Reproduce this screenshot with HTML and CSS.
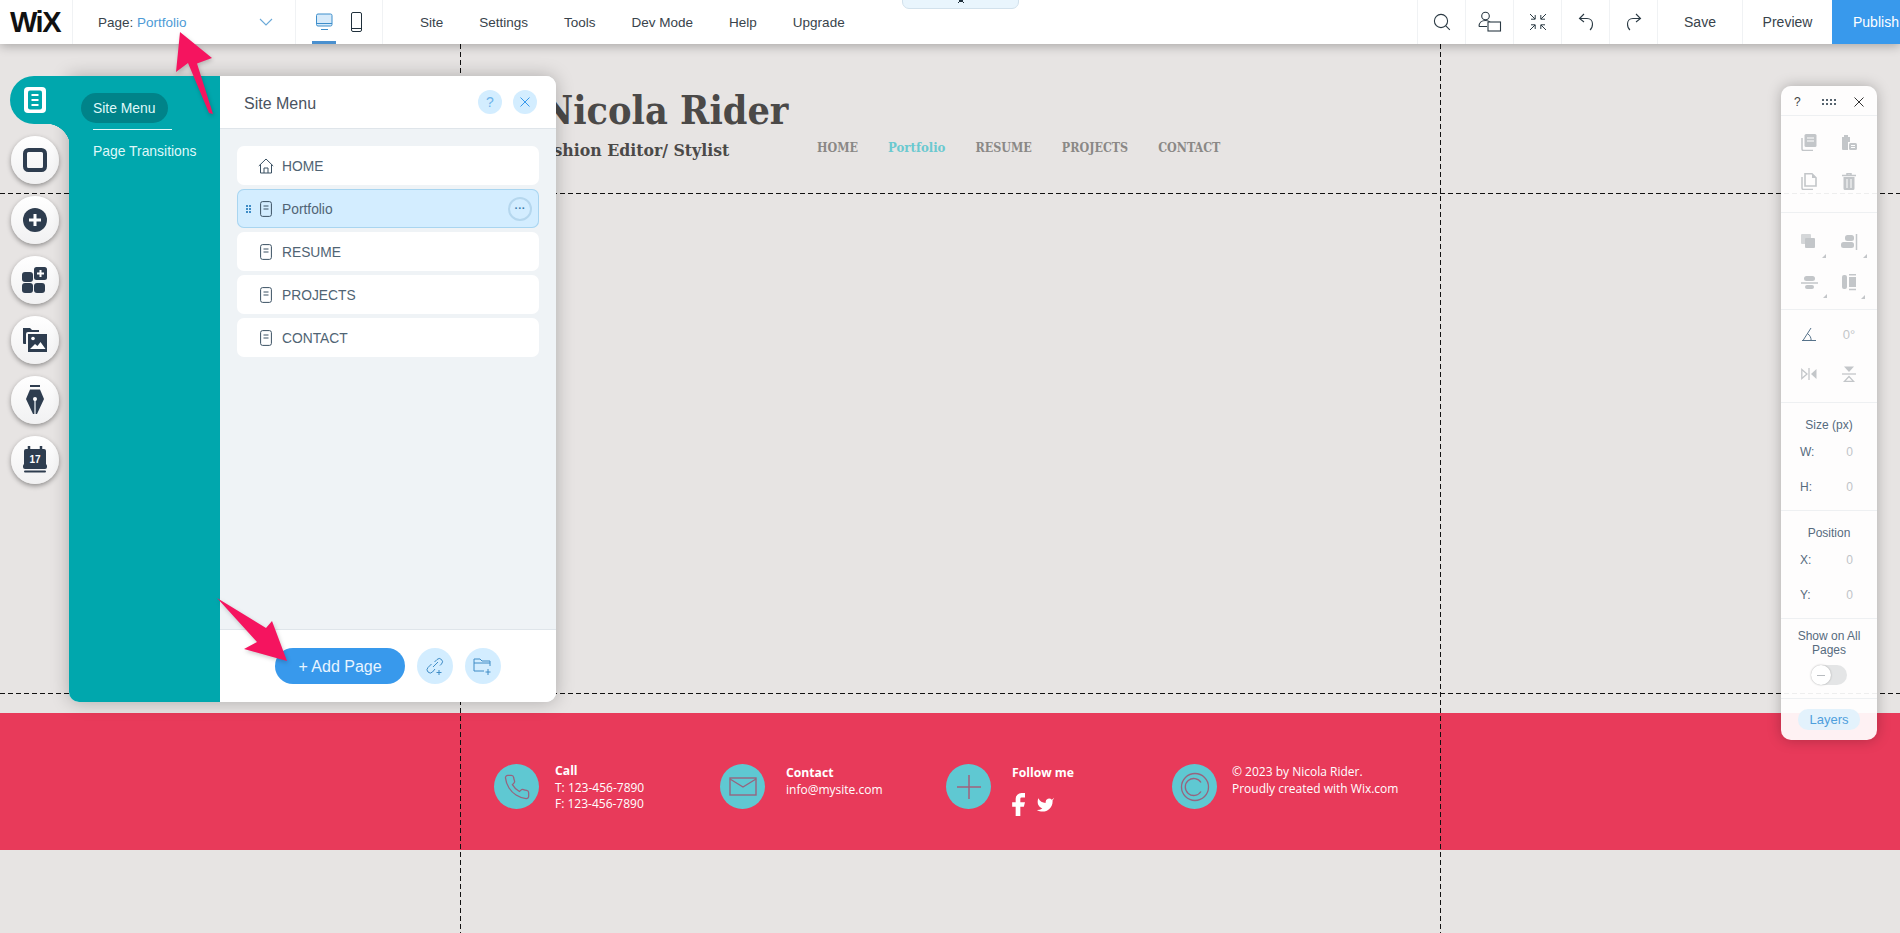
FILE: index.html
```html
<!DOCTYPE html>
<html lang="en">
<head>
<meta charset="utf-8">
<title>Wix Editor</title>
<link rel="stylesheet" href="styles.css">
</head>
<body>
<svg class="defs" width="0" height="0" aria-hidden="true">
  <symbol id="pg" viewBox="0 0 12 16"><rect x=".6" y=".6" width="10.800" height="14.800" rx="2" fill="none" stroke="currentColor"/><path d="M3.500 5h5M3.500 8h5" stroke="currentColor" fill="none"/></symbol>
</svg>
<header class="topbar">
  <div class="cell logo-cell"><span class="logo">WiX</span></div>
  <div class="cell page-cell">
    <span class="page-label">Page: <span class="blue">Portfolio</span></span>
    <svg class="chev" width="14" height="8" viewBox="0 0 14 8"><path d="M1 1l6 6 6-6" fill="none" stroke="#6aa9d8" stroke-width="1.100"/></svg>
  </div>
  <div class="cell device-cell">
    <div class="device active">
      <svg width="17" height="18" viewBox="0 0 17 18"><rect x=".5" y="1" width="15.500" height="12" rx="1.500" fill="#d6eafa" stroke="#3d8ecb"/><path d="M.5 10.500h15.500M5 16.500h7" stroke="#3d8ecb" fill="none"/></svg>
    </div>
    <div class="device">
      <svg width="11" height="20" viewBox="0 0 11 20"><rect x=".5" y=".5" width="10" height="19" rx="1.500" fill="none" stroke="#20303c"/><path d="M.5 16.500h10" stroke="#20303c"/></svg>
    </div>
  </div>
  <nav class="menu">
    <span>Site</span><span>Settings</span><span>Tools</span><span>Dev Mode</span><span>Help</span><span>Upgrade</span>
  </nav>
  <div class="tools">
    <div class="tool"><svg width="18" height="18" viewBox="0 0 18 18"><circle cx="8" cy="8" r="6.600" fill="none" stroke="#2b3a44" stroke-width="1.100"/><path d="M12.800 12.800l4 4" stroke="#2b3a44" stroke-width="1.100"/></svg></div>
    <div class="tool"><svg width="24" height="22" viewBox="0 0 24 22"><circle cx="7.500" cy="5" r="3.800" fill="none" stroke="#2b3a44" stroke-width="1.100"/><path d="M1 15.500c0-3.500 2.500-6 6.500-6 2 0 3.500.6 4.600 1.600M1 15.500h8" fill="none" stroke="#2b3a44" stroke-width="1.100"/><rect x="10" y="11" width="12.500" height="9" fill="#fff" stroke="#2b3a44" stroke-width="1.100"/></svg></div>
    <div class="tool"><svg width="18" height="18" viewBox="0 0 18 18"><path d="M1 1l5 5M6.200 2v4.200H2M17 1l-5 5M11.800 2v4.200H16M1 17l5-5M6.200 16v-4.200H2M17 17l-5-5M11.800 16v-4.200H16" fill="none" stroke="#2b3a44"/></svg></div>
    <div class="tool"><svg width="16" height="18" viewBox="0 0 16 18"><path d="M6 1L1.500 5.500 6 9M1.500 5.500H9c3.500 0 5.500 2.500 5.500 5.500 0 2.600-1 4.800-2.500 6" fill="none" stroke="#2b3a44" stroke-width="1.100"/></svg></div>
    <div class="tool"><svg width="16" height="18" viewBox="0 0 16 18"><path d="M10 1l4.500 4.500L10 9M14.500 5.500H7c-3.500 0-5.500 2.500-5.500 5.500 0 2.600 1 4.800 2.500 6" fill="none" stroke="#2b3a44" stroke-width="1.100"/></svg></div>
    <div class="action save">Save</div>
    <div class="action preview">Preview</div>
    <div class="publish">Publish</div>
  </div>
  <div class="tab-pill"><svg width="8" height="4" viewBox="0 0 8 4"><path d="M1 0l3 3 3-3M1 4l3-3 3 3" fill="none" stroke="#20303c"/></svg></div>
</header>

<main class="stage">
  <div class="site">
    <section class="site-head">
      <div class="brand">
        <h1>Nicola Rider</h1>
        <p>Fashion Editor/ Stylist</p>
      </div>
      <nav class="site-nav">
        <span>HOME</span><span class="current">Portfolio</span><span>RESUME</span><span>PROJECTS</span><span>CONTACT</span>
      </nav>
    </section>
    <section class="site-body"></section>
    <footer class="site-foot">
      <div class="foot-inner">
        <div class="foot-item call">
          <div class="disc"><svg width="28" height="28" viewBox="0 0 24 24"><path d="M22 16.920v3a2 2 0 0 1-2.180 2 19.790 19.790 0 0 1-8.630-3.070 19.500 19.500 0 0 1-6-6 19.790 19.790 0 0 1-3.070-8.670A2 2 0 0 1 4.110 2h3a2 2 0 0 1 2 1.720 12.840 12.840 0 0 0 .7 2.810 2 2 0 0 1-.45 2.110L8.090 9.910a16 16 0 0 0 6 6l1.270-1.270a2 2 0 0 1 2.110-.45 12.840 12.840 0 0 0 2.810.7A2 2 0 0 1 22 16.920z" fill="none" stroke="#97647f" stroke-width="1.100"/></svg></div>
          <div class="foot-text call-text"><b>Call</b><span>T: 123-456-7890</span><span>F: 123-456-7890</span></div>
        </div>
        <div class="foot-item contact">
          <div class="disc"><svg width="28" height="20" viewBox="0 0 28 20"><rect x="1" y="1" width="26" height="17" fill="none" stroke="#97647f" stroke-width="1.400"/><path d="M1 2l13 8 13-8" fill="none" stroke="#97647f" stroke-width="1.400"/></svg></div>
          <div class="foot-text"><b>Contact</b><span>info@mysite.com</span></div>
        </div>
        <div class="foot-item follow">
          <div class="disc"><svg width="26" height="26" viewBox="0 0 26 26"><path d="M13 1v24M1 13h24" stroke="#a2607c" stroke-width="1.500"/></svg></div>
          <div class="foot-text"><b>Follow me</b>
            <div class="social">
              <svg width="14" height="23" viewBox="6 2 12 20" preserveAspectRatio="none"><path d="M18 2h-3a5 5 0 0 0-5 5v3H7v4h3v8h4v-8h3l1-4h-4V7a1 1 0 0 1 1-1h3z" fill="#fff"/></svg>
              <svg width="19" height="17" viewBox="0 2 24 20"><path d="M23 3a10.900 10.900 0 0 1-3 3 4.480 4.480 0 0 0-7.860 3v1A10.660 10.660 0 0 1 3 4s-4 9 5 13a11.640 11.640 0 0 1-7 2c9 5 20 0 20-11.500a4.500 4.500 0 0 0-.08-.83A7.720 7.720 0 0 0 23 3z" fill="#fff"/></svg>
            </div>
          </div>
        </div>
        <div class="foot-item copy">
          <div class="disc"><svg width="30" height="30" viewBox="0 0 30 30"><circle cx="15" cy="15" r="13.500" fill="none" stroke="#97647f" stroke-width="1.300"/><path d="M21 10.500a8.500 8.500 0 1 0 0 9" fill="none" stroke="#97647f" stroke-width="1.300"/></svg></div>
          <div class="foot-text plain"><span>© 2023 by Nicola Rider.</span><span>Proudly created with Wix.com</span></div>
        </div>
      </div>
    </footer>
  </div>

  <div class="guide v v1"></div>
  <div class="guide v v2"></div>
  <div class="guide h h1"></div>
  <div class="guide h h2"></div>

  <div class="rail">
    <div class="rail-btn"><svg width="24" height="24" viewBox="0 0 24 24"><rect x="2" y="2" width="20" height="20" rx="3.500" fill="none" stroke="#2e3d4f" stroke-width="4"/></svg></div>
    <div class="rail-btn"><svg width="24" height="24" viewBox="0 0 24 24"><circle cx="12" cy="12" r="12" fill="#2e3d4f"/><path d="M12 6v12M6 12h12" stroke="#fff" stroke-width="3"/></svg></div>
    <div class="rail-btn"><svg width="26" height="26" viewBox="0 0 26 26"><g fill="#2e3d4f"><rect x="0" y="5" width="11" height="10" rx="3"/><rect x="0" y="16" width="11" height="10" rx="3"/><rect x="12" y="16" width="11" height="10" rx="3"/><rect x="12" y="0" width="13" height="13" rx="2.500"/></g><path d="M18.500 3v7M15 6.500h7" stroke="#fff" stroke-width="2"/></svg></div>
    <div class="rail-btn"><svg width="26" height="26" viewBox="0 0 26 26"><path d="M1 1h7l2 2h7v2H6a2 2 0 0 0-2 2v10H2a1 1 0 0 1-1-1z" fill="#2e3d4f"/><rect x="6" y="7" width="19" height="18" fill="#2e3d4f"/><circle cx="11" cy="11.500" r="1.800" fill="#fff"/><path d="M8 22l5-5 2.500 2 3-4 5 7z" fill="#fff"/></svg></div>
    <div class="rail-btn"><svg width="20" height="32" viewBox="0 0 20 32"><rect x="5" y="1" width="10" height="2" fill="#2e3d4f"/><path d="M5 5.500h10L19 15l-7 15h-4L1 15z" fill="#2e3d4f"/><path d="M10 16v14" stroke="#c4ccd3" stroke-width="1.600"/><circle cx="10" cy="15" r="2" fill="#fff"/></svg></div>
    <div class="rail-btn cal"><svg width="24" height="28" viewBox="0 0 24 28"><path d="M6 0v4M18 0v4" stroke="#2e3d4f" stroke-width="2.500"/><rect x="1" y="3" width="22" height="18" rx="2" fill="#2e3d4f"/><rect x="0" y="18" width="24" height="5" rx="2" fill="#2e3d4f"/><rect x="1" y="24.500" width="22" height="2" rx="1" fill="#2e3d4f"/></svg><span class="cal-num">17</span></div>
  </div>

  <div class="pages-panel">
    <div class="panel-tab">
      <svg width="22" height="26" viewBox="0 0 22 26"><rect width="22" height="26" rx="4" fill="#fff"/><rect x="4" y="3.500" width="14" height="19" rx="2" fill="#00a7ad"/><path d="M7.500 8h7M7.500 13h7M7.500 18h7" stroke="#fff" stroke-width="2"/></svg>
    </div>
    <aside class="teal">
      <div class="teal-pill">Site Menu</div>
      <div class="teal-line"></div>
      <div class="teal-link">Page Transitions</div>
    </aside>
    <div class="pane">
      <div class="pane-head">
        <span class="pane-title">Site Menu</span>
        <div class="pane-btns">
          <span class="round">?</span>
          <span class="round"><svg width="12" height="12" viewBox="0 0 12 12"><path d="M1.500 1.500l9 9M10.500 1.500l-9 9" stroke="#3899ec"/></svg></span>
        </div>
      </div>
      <div class="rows">
        <div class="row">
          <span class="row-icon home"><svg width="16" height="16" viewBox="0 0 16 16"><path d="M.8 8L8 1l7.200 7M2.500 6.500V15h11V6.500M6 15v-5h4v5" fill="none" stroke="#3b5163"/></svg></span>
          <span>HOME</span>
        </div>
        <div class="row selected">
          <span class="dots"><i></i><i></i><i></i><i></i><i></i><i></i></span>
          <span class="row-icon"><svg width="12" height="16"><use href="#pg"/></svg></span>
          <span>Portfolio</span>
          <span class="more">···</span>
        </div>
        <div class="row"><span class="row-icon"><svg width="12" height="16"><use href="#pg"/></svg></span><span>RESUME</span></div>
        <div class="row"><span class="row-icon"><svg width="12" height="16"><use href="#pg"/></svg></span><span>PROJECTS</span></div>
        <div class="row"><span class="row-icon"><svg width="12" height="16"><use href="#pg"/></svg></span><span>CONTACT</span></div>
      </div>
      <div class="pane-foot">
        <div class="add">+ Add Page</div>
        <div class="circle"><svg width="20" height="20" viewBox="0 0 20 20"><path d="M8 11l5-5M6.500 8L3 11.500a3 3 0 0 0 4.500 4.500L10 13M9.500 6L12 3.500A3 3 0 0 1 16.500 8l-1.500 1.500M14 14v5M11.500 16.500h5" fill="none" stroke="#3f8cc6"/></svg></div>
        <div class="circle"><svg width="20" height="20" viewBox="0 0 20 20"><path d="M1 3h6l2 2h8v5M1 3v12h10M1 7h16M15 13v6M12.500 16h5" fill="none" stroke="#3f8cc6"/></svg></div>
      </div>
    </div>
  </div>

  <div class="inspector">
    <div class="ins-head">
      <span class="q">?</span>
      <span class="grip"><i></i><i></i><i></i><i></i><i></i><i></i><i></i><i></i></span>
      <svg width="10" height="10" viewBox="0 0 10 10"><path d="M.5.5l9 9M9.500.5l-9 9" stroke="#333"/></svg>
    </div>
    <div class="ins-sec s1">
      <svg width="16" height="17" viewBox="0 0 16 17"><rect x="3.500" y="0" width="12" height="13" rx="1.500" class="f"/><path d="M6 4h7M6 7h7" stroke="#fff"/><path d="M1 4v11a1.500 1.500 0 0 0 1.500 1.500H12" fill="none" stroke="#c3c6c9" stroke-width="1.500"/></svg>
      <svg width="16" height="17" viewBox="0 0 16 17"><path d="M1 3h2V1h4v2h2v5H7v8H2a1 1 0 0 1-1-1z" class="f"/><rect x="8" y="9" width="8" height="7" rx="1.500" class="f"/><path d="M10 11.500h4M10 13.500h4" stroke="#fff"/></svg>
      <svg width="16" height="17" viewBox="0 0 16 17"><path d="M4 .8h7l4 4V13H4z" fill="none" stroke="#c3c6c9" stroke-width="1.600"/><path d="M11 1l4 4h-4z" class="f"/><path d="M1 4v11a1.500 1.500 0 0 0 1.500 1.500H12" fill="none" stroke="#c3c6c9" stroke-width="1.500"/></svg>
      <svg width="14" height="17" viewBox="0 0 14 17"><path d="M0 2.500h14M5 2.500V.8h4v1.700" fill="none" stroke="#c3c6c9" stroke-width="1.500"/><path d="M1.500 4h11v11.500a1.500 1.500 0 0 1-1.500 1.500H3a1.500 1.500 0 0 1-1.500-1.500z" class="f"/><path d="M5 6v9M9 6v9" stroke="#fff"/></svg>
    </div>
    <div class="ins-sec s2">
      <span class="tri"><svg width="16" height="16" viewBox="0 0 16 16"><rect x="0" y="0" width="10" height="10" rx="1" fill="#d5d7d9"/><rect x="4" y="4" width="10" height="10" rx="1" class="f"/></svg></span>
      <span class="tri"><svg width="17" height="16" viewBox="0 0 17 16"><rect x="4" y="1" width="9" height="6" rx="2.500" class="f"/><rect x="0" y="8" width="13" height="6" rx="2.500" class="f"/><path d="M15.500 0v16" stroke="#c3c6c9" stroke-width="1.500"/></svg></span>
      <span class="tri"><svg width="17" height="14" viewBox="0 0 17 14"><rect x="3" y="0" width="11" height="5" rx="2.500" class="f"/><path d="M0 7h17" stroke="#c3c6c9" stroke-width="1.500"/><rect x="4" y="9" width="9" height="4" rx="2" class="f"/></svg></span>
      <span class="tri"><svg width="14" height="17" viewBox="0 0 14 17"><rect x="0" y="1" width="5" height="14" rx="2" class="f"/><rect x="7" y="3" width="7" height="10" class="f"/><path d="M7 .8h7M7 15.500h7" stroke="#c3c6c9" stroke-width="1.500"/></svg></span>
    </div>
    <div class="ins-sec s3">
      <svg width="14" height="14" viewBox="0 0 14 14"><path d="M0 13.500h14M1 13.500L9 1M6 7c2 1.300 3 3.500 3.200 6.500" fill="none" stroke="#56728a"/></svg>
      <span class="deg">0°</span>
      <svg width="16" height="12" viewBox="0 0 16 12"><path d="M.8 1.500L6 6 .8 10.500z" fill="none" stroke="#c3c6c9" stroke-width="1.300"/><path d="M8 0v12" stroke="#c3c6c9" stroke-width="1.300"/><path d="M15.500 1L10 6l5.500 5z" class="f"/></svg>
      <svg width="14" height="16" viewBox="0 0 14 16"><path d="M2 .5h10L7 6z" class="f"/><path d="M0 8h14" stroke="#c3c6c9" stroke-width="1.300"/><path d="M2.500 15.300h9L7 10.500z" fill="none" stroke="#c3c6c9" stroke-width="1.300"/></svg>
    </div>
    <div class="ins-form">
      <div class="form-title">Size (px)</div>
      <div class="form-row"><span>W:</span><span class="val">0</span></div>
      <div class="form-row"><span>H:</span><span class="val">0</span></div>
    </div>
    <div class="ins-form">
      <div class="form-title">Position</div>
      <div class="form-row"><span>X:</span><span class="val">0</span></div>
      <div class="form-row"><span>Y:</span><span class="val">0</span></div>
    </div>
    <div class="ins-show">
      <div class="show-label">Show on All Pages</div>
      <div class="toggle"><span class="knob"></span></div>
    </div>
    <div class="ins-layers"><span class="layers">Layers</span></div>
  </div>

  <svg class="arrow a1" width="44" height="86" viewBox="0 0 44 86"><path d="M6 0L38 26 23 31.500 39 82 35 81 14 31 2 40z" fill="#f5145f"/></svg>
  <svg class="arrow a2" width="74" height="68" viewBox="0 0 74 68"><path d="M1 1L50 31 56 24 71 64 28 52 41 45z" fill="#f5145f"/></svg>
</main>
</body>
</html>
```
FILE: styles.css
```css
* { box-sizing: border-box; }
html, body { margin: 0; height: 100%; }
body {
  height: 933px;
  overflow: hidden;
  background: #e7e4e3;
  font-family: "Liberation Sans", Arial, sans-serif;
  color: #2b3a44;
  display: flex;
  flex-direction: column;
}
.defs { position: absolute; }

/* Top bar */
.topbar {
  position: relative;
  z-index: 5;
  flex: 0 0 44px;
  height: 44px;
  display: flex;
  background: #fff;
  box-shadow: 0 2px 10px rgba(0, 0, 0, .28);
  font-size: 13.5px;
  color: #38434b;
}
.cell { display: flex; align-items: center; border-right: 1px solid #f0f2f4; }
.logo-cell { width: 73px; padding-left: 10px; }
.logo {
  font-size: 29px;
  font-weight: 700;
  letter-spacing: -1.5px;
  color: #111;
  line-height: 30px;
}
.page-cell { width: 223px; padding-left: 25px; justify-content: space-between; padding-right: 22px; }
.blue { color: #4d9bd6; }
.device-cell { width: 87px; padding-left: 16px; gap: 8px; align-items: stretch; }
.device { width: 24px; display: flex; align-items: center; justify-content: center; border-bottom: 3px solid transparent; padding-top: 2px; }
.device.active { border-bottom-color: #4a90cf; }
.menu { flex: 1; display: flex; align-items: center; gap: 36px; padding-left: 37px; }
.tools { display: flex; align-items: stretch; font-size: 14px; }
.tool { width: 48px; border-left: 1px solid #f0f2f4; display: flex; align-items: center; justify-content: center; }
.action { display: flex; align-items: center; justify-content: center; border-left: 1px solid #f0f2f4; }
.save { width: 85px; }
.preview { width: 90px; }
.publish { width: 68px; background: #3899ec; color: #fff; display: flex; align-items: center; padding-left: 21px; white-space: nowrap; overflow: hidden; }
.tab-pill {
  position: absolute;
  left: 902px;
  top: -2px;
  width: 117px;
  height: 11px;
  background: #e9f5fd;
  border: 1px solid #d2e1ec;
  border-radius: 0 0 7px 7px;
  display: flex;
  justify-content: center;
  align-items: flex-end;
  padding-bottom: 5px;
}

/* Site canvas */
.stage { position: relative; flex: 1; }
.site { display: flex; flex-direction: column; }
.site-head {
  width: 980px;
  height: 149px;
  margin: 0 auto;
  padding: 41px 0 0 82px;
  display: flex;
  color: #4b4948;
  font-family: "DejaVu Serif Condensed", "DejaVu Serif", serif;
}
.brand { width: 275px; flex: none; }
.brand h1 { margin: 0 0 0 -1px; font-size: 39.2px; line-height: 50px; font-weight: 700; white-space: nowrap; }
.brand p { margin: 2px 0 0 -9px; font-size: 17.5px; line-height: 26px; font-weight: 700; white-space: nowrap; }
.site-nav { display: flex; gap: 30px; margin-top: 54px; height: 18px; font-size: 12.4px; line-height: 18px; font-weight: 700; color: #8a8886; }
.current { color: #6bc9d0; font-size: 13px; }
.site-body { height: 520px; }
.site-foot { height: 137px; background: #e83a5a; }
.foot-inner { width: 980px; margin: 0 auto; position: relative; height: 100%; display: flex; padding: 51px 0 0 34px; font-family: "Open Sans", sans-serif; color: #fff; font-size: 12px; line-height: 16.5px; }
.foot-item { display: flex; flex: none; }
.call { width: 226px; }
.contact { width: 226px; }
.follow { width: 226px; }
.copy { width: 245px; }
.disc { width: 45px; height: 45px; border-radius: 50%; background: #5fc8d2; flex: none; display: flex; align-items: center; justify-content: center; }
.foot-text { display: flex; flex-direction: column; margin-left: 21px; white-space: nowrap; }
.foot-text b { font-size: 12.2px; line-height: 18px; font-weight: 700; }
.call-text { margin-top: -2px; margin-left: 16px; line-height: 16px; }
.plain { margin-left: 15px; }
.social { display: flex; align-items: center; gap: 11px; margin-top: 11px; margin-left: -1px; }

/* Guides */
.guide { position: absolute; z-index: 1; }
.guide.v { top: 0; bottom: 0; width: 1px; background: repeating-linear-gradient(to bottom, #111 0 5px, transparent 5px 8px); }
.guide.h { left: 0; right: 0; height: 1px; background: repeating-linear-gradient(to right, #111 0 5px, transparent 5px 8px); }
.v1 { left: 460px; }
.v2 { left: 1440px; }
.h1 { top: 149px; }
.h2 { top: 649px; }

/* Left rail */
.rail { position: absolute; z-index: 2; left: 11px; top: 92px; display: flex; flex-direction: column; gap: 12px; }
.rail-btn {
  position: relative;
  width: 48px;
  height: 48px;
  border-radius: 50%;
  background: linear-gradient(#fff, #f1f1f2);
  box-shadow: 0 2px 5px rgba(0, 0, 0, .38);
  display: flex;
  align-items: center;
  justify-content: center;
}
.cal-num { position: absolute; left: 0; right: 0; top: 18px; text-align: center; font-size: 10px; line-height: 12px; font-weight: 700; color: #fff; }

/* Site menu panel */
.pages-panel {
  position: absolute;
  z-index: 3;
  left: 69px;
  top: 32px;
  width: 487px;
  height: 626px;
  display: flex;
  border-radius: 0 10px 10px 10px;
  background: #fff;
  box-shadow: 0 0 18px rgba(0, 0, 0, .25);
}
.panel-tab {
  position: absolute;
  left: -59px;
  top: 0;
  width: 60px;
  height: 48px;
  background: #00a7ad;
  border-radius: 24px 0 0 24px;
  display: flex;
  align-items: center;
  padding-left: 14px;
}
.panel-tab::after {
  content: "";
  position: absolute;
  right: 0;
  top: 48px;
  width: 24px;
  height: 24px;
  background: radial-gradient(circle at 0 100%, transparent 24px, #00a7ad 24.500px);
}
.teal { width: 151px; flex: none; background: #00a7ad; border-radius: 0 0 0 10px; color: #dff8f9; padding: 17px 0 0 12px; font-size: 13.9px; }
.teal-pill { width: 87px; height: 30px; border-radius: 15px; background: #008389; line-height: 30px; padding-left: 12px; white-space: nowrap; }
.teal-line { width: 79px; height: 1px; background: #dff8f9; margin: 6px 0 0 12px; }
.teal-link { margin: 13px 0 0 12px; line-height: 16px; white-space: nowrap; }
.pane { flex: 1; display: flex; flex-direction: column; background: #eff3f6; border-radius: 0 10px 10px 0; overflow: hidden; }
.pane-head { height: 53px; flex: none; background: #fff; border-bottom: 1px solid #dfe5ea; display: flex; align-items: center; justify-content: space-between; padding: 0 19px 0 24px; }
.pane-title { font-size: 16px; color: #4a535f; margin-top: 4px; }
.pane-btns { display: flex; gap: 11px; }
.round { width: 24px; height: 24px; border-radius: 50%; background: #d3edff; color: #6eb3ea; display: flex; align-items: center; justify-content: center; font-size: 14px; }
.rows { flex: 1; padding: 17px 17px 0; display: flex; flex-direction: column; gap: 4px; }
.row { height: 39px; flex: none; position: relative; background: #fff; border-radius: 7px; display: flex; align-items: center; padding-top: 1px; font-size: 13.8px; color: #506474; }
.row-icon { width: 45px; flex: none; display: flex; justify-content: flex-end; padding-right: 10px; color: #3b5163; }
.row-icon.home { padding-right: 8px; }
.row.selected { background: #d3edff; box-shadow: inset 0 0 0 1px #a9d5f0; }
.dots { position: absolute; left: 9px; top: 16px; width: 5px; display: grid; grid-template-columns: 2px 2px; gap: 1px; }
.dots i { width: 2px; height: 2px; background: #3f8cc6; }
.more { position: absolute; right: 7px; top: 7.500px; width: 24px; height: 24px; border-radius: 50%; border: 2px solid #b5d7ee; color: #3f7fae; font-size: 11px; line-height: 18px; text-align: center; font-weight: 700; }
.pane-foot { height: 73px; flex: none; background: #fff; border-top: 1px solid #dfe5ea; display: flex; align-items: center; padding: 0 0 1px 55px; gap: 12px; }
.add { width: 130px; height: 36px; border-radius: 18px; background: #3899ec; color: #e7f4ff; font-size: 16px; line-height: 37px; text-align: center; }
.circle { width: 36px; height: 36px; border-radius: 50%; background: #d3edff; display: flex; align-items: center; justify-content: center; }

/* Right inspector */
.inspector {
  position: absolute;
  z-index: 3;
  left: 1781px;
  top: 42px;
  width: 96px;
  height: 654px;
  display: flex;
  flex-direction: column;
  background: rgba(255, 255, 255, .93);
  border-radius: 10px;
  box-shadow: 0 0 14px rgba(0, 0, 0, .25);
  color: #566b7e;
  font-size: 12px;
}
.ins-head { height: 30px; flex: none; display: flex; align-items: center; justify-content: space-between; padding: 2px 13px 0 13px; border-bottom: 1px solid #eef0f2; }
.q { font-size: 12px; color: #444; }
.grip { width: 14px; margin-left: 3px; display: grid; grid-template-columns: repeat(4, 2px); gap: 2px; }
.grip i { width: 2px; height: 2px; background: #56636e; }
.ins-sec { flex: none; display: grid; grid-template-columns: 40px 40px; justify-content: center; justify-items: center; align-items: center; border-bottom: 1px solid #eef0f2; }
.f { fill: #c3c6c9; }
.s1 { height: 97px; padding-top: 7px; grid-auto-rows: 39px; align-content: start; }
.s2 { height: 97px; padding-top: 8px; grid-auto-rows: 41px; align-content: start; }
.s3 { height: 93px; padding-top: 4px; grid-auto-rows: 40px; align-content: start; }
.tri { position: relative; display: flex; }
.tri::after { content: ""; position: absolute; right: -9px; bottom: -8px; border-left: 4px solid transparent; border-bottom: 4px solid #c3c6c9; }
.deg { font-size: 13px; color: #c3c6c9; }
.ins-form { height: 108px; flex: none; border-bottom: 1px solid #eef0f2; padding-top: 14px; }
.form-title { text-align: center; line-height: 16px; height: 16px; }
.form-row { height: 35px; padding: 0 24px 0 19px; display: flex; justify-content: space-between; align-items: center; }
.form-title + .form-row { margin-top: 1px; }
.val { color: #c0c4c8; }
.ins-show { height: 80px; flex: none; border-bottom: 1px solid #eef0f2; padding-top: 10px; text-align: center; }
.show-label { line-height: 14px; padding: 0 10px; }
.toggle { width: 36px; height: 20px; margin: 8px auto 0; border-radius: 10px; background: #e4e5e6; }
.knob { display: block; width: 20px; height: 20px; border-radius: 50%; background: #fff; box-shadow: 0 0 2px rgba(0, 0, 0, .3); position: relative; }
.knob::after { content: ""; position: absolute; left: 6px; top: 9.500px; width: 8px; height: 1px; background: #b8bcc0; }
.ins-layers { flex: 1; display: flex; align-items: flex-start; justify-content: center; padding-top: 10px; }
.layers { width: 62px; height: 21px; line-height: 22px; border-radius: 10px; background: #e3f2fc; color: #4f9fdc; text-align: center; font-size: 13px; }

/* Annotation arrows */
.arrow { position: absolute; z-index: 6; filter: drop-shadow(1px 2px 2px rgba(0, 0, 0, .2)); }
.a1 { left: 174px; top: -12px; }
.a2 { left: 216px; top: 553px; }
```
